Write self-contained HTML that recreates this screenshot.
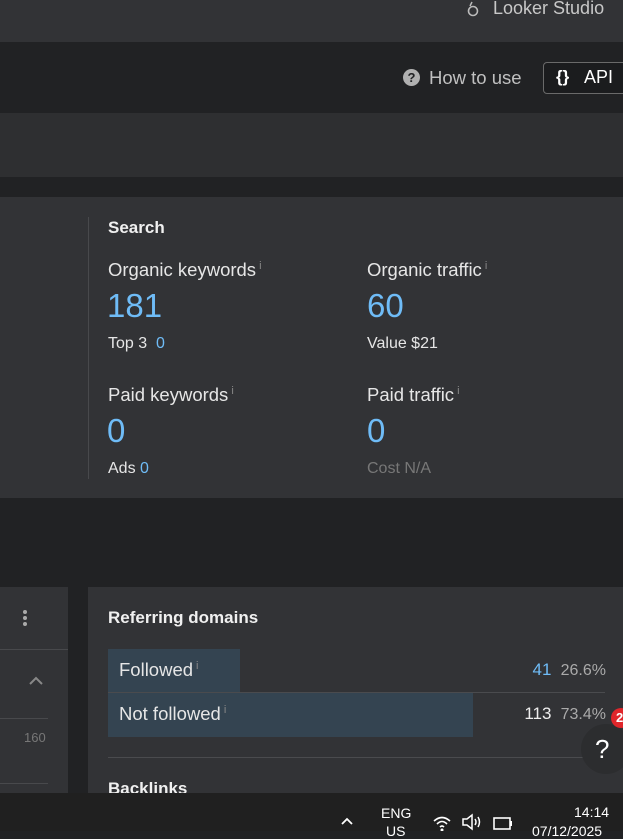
<!DOCTYPE html>
<html><head><style>
*{margin:0;padding:0;box-sizing:border-box}
body{width:623px;height:831px;overflow:hidden;background:#212224;font-family:"Liberation Sans",sans-serif;color:#e8e8e8;position:relative}
.a{position:absolute;white-space:nowrap}
.lbl{font-size:18.5px;color:#e6e6e6}
.lbl sup{font-size:11px;color:#888;vertical-align:7px;margin-left:3px}
.big{font-size:33px;color:#6fbcf7}
.sm{font-size:16px;color:#e6e6e6}
.blue{color:#6fbcf7}
</style></head><body>
<div class="a" style="left:0;top:0;width:623px;height:42px;background:#323336"></div>
<svg class="a" style="left:466px;top:0" width="14" height="18"><circle cx="7" cy="11" r="4.5" fill="none" stroke="#bbb" stroke-width="1.6"/><path d="M4 6 L6 2" stroke="#bbb" stroke-width="1.5"/></svg>
<div class="a" style="left:493px;top:-2px;font-size:18px;color:#c8c8c8">Looker Studio</div>
<div class="a" style="left:0;top:42px;width:623px;height:71px;background:#212224"></div>
<div class="a" style="left:403px;top:69px;width:17px;height:17px;border-radius:50%;background:#b0b0b0;color:#212224;font-size:13px;font-weight:bold;text-align:center;line-height:17px">?</div>
<div class="a" style="left:429px;top:67px;font-size:18.5px;color:#c0c0c0">How to use</div>
<div class="a" style="left:543px;top:62px;width:90px;height:32px;border:1px solid #6a6a6a;border-radius:4px;background:#1b1c1e"></div>
<div class="a" style="left:556px;top:67px;font-size:17px;font-weight:bold;color:#fff">{}</div>
<div class="a" style="left:584px;top:67px;font-size:18px;color:#fff">API</div>
<div class="a" style="left:0;top:113px;width:623px;height:64px;background:#2e2f31"></div>
<div class="a" style="left:0;top:197px;width:623px;height:301px;background:#323336"></div>
<div class="a" style="left:88px;top:217px;width:1px;height:262px;background:#48494c"></div>
<div class="a" style="left:108px;top:218px;font-size:17px;font-weight:bold;color:#f0f0f0">Search</div>
<div class="a lbl" style="left:108px;top:259px">Organic keywords<sup>i</sup></div>
<div class="a big" style="left:107px;top:287px">181</div>
<div class="a sm" style="left:108px;top:335px">Top 3 <span class="blue">&nbsp;0</span></div>
<div class="a lbl" style="left:367px;top:259px">Organic traffic<sup>i</sup></div>
<div class="a big" style="left:367px;top:287px">60</div>
<div class="a sm" style="left:367px;top:335px">Value $21</div>
<div class="a lbl" style="left:108px;top:384px">Paid keywords<sup>i</sup></div>
<div class="a big" style="left:107px;top:412px">0</div>
<div class="a sm" style="left:108px;top:460px">Ads <span class="blue">0</span></div>
<div class="a lbl" style="left:367px;top:384px">Paid traffic<sup>i</sup></div>
<div class="a big" style="left:367px;top:412px">0</div>
<div class="a sm" style="left:367px;top:460px;color:#777">Cost N/A</div>
<div class="a" style="left:0;top:587px;width:68px;height:206px;background:#323336"></div>
<div class="a" style="left:0;top:649px;width:68px;height:1px;background:#48494c"></div>
<div class="a" style="left:0;top:718px;width:48px;height:1px;background:#48494c"></div>
<div class="a" style="left:0;top:783px;width:48px;height:1px;background:#48494c"></div>
<svg class="a" style="left:21px;top:609px" width="8" height="18"><circle cx="4" cy="3" r="2" fill="#aaa"/><circle cx="4" cy="9" r="2" fill="#aaa"/><circle cx="4" cy="15" r="2" fill="#aaa"/></svg>
<svg class="a" style="left:28px;top:675px" width="16" height="12"><path d="M2 9 L8 3 L14 9" fill="none" stroke="#888" stroke-width="2"/></svg>
<div class="a" style="left:24px;top:730px;font-size:13px;color:#777">160</div>
<div class="a" style="left:88px;top:587px;width:535px;height:206px;background:#323336"></div>
<div class="a" style="left:108px;top:608px;font-size:17px;font-weight:bold;color:#f0f0f0">Referring domains</div>
<div class="a" style="left:108px;top:649px;width:132px;height:43px;background:#344451"></div>
<div class="a" style="left:108px;top:692px;width:497px;height:1px;background:#4a4b4e"></div>
<div class="a" style="left:108px;top:693px;width:365px;height:44px;background:#344451"></div>
<div class="a lbl" style="left:119px;top:659px">Followed<sup>i</sup></div>
<div class="a lbl" style="left:119px;top:703px">Not followed<sup>i</sup></div>
<div class="a" style="right:17px;top:660px;font-size:17px"><span class="blue">41</span> <span style="color:#aaa;font-size:16px">&nbsp;26.6%</span></div>
<div class="a" style="right:17px;top:704px;font-size:17px;color:#eee">113 <span style="color:#aaa;font-size:16px">&nbsp;73.4%</span></div>
<div class="a" style="left:108px;top:757px;width:497px;height:1px;background:#4a4b4e"></div>
<div class="a" style="left:108px;top:779px;font-size:17px;font-weight:bold;color:#f0f0f0">Backlinks</div>
<div class="a" style="left:581px;top:724px;width:50px;height:50px;border-radius:50%;background:#2c2d2f;color:#fff;font-size:26px;line-height:50px;padding-left:14px">?</div>
<div class="a" style="left:611px;top:708px;width:20px;height:20px;border-radius:50%;background:#e0262b;color:#fff;font-size:13px;font-weight:bold;line-height:20px;padding-left:5px">2</div>
<div class="a" style="left:0;top:793px;width:623px;height:38px;background:#202020"></div>
<svg class="a" style="left:340px;top:816px" width="14" height="10"><path d="M2 8 L7 3 L12 8" fill="none" stroke="#fff" stroke-width="1.8"/></svg>
<div class="a" style="left:381px;top:805px;font-size:14px;color:#fff">ENG</div>
<div class="a" style="left:386px;top:823px;font-size:14px;color:#fff">US</div>
<svg class="a" style="left:432px;top:814px" width="20" height="17"><path d="M2 7 Q10 0 18 7 M5 10 Q10 5 15 10 M8 13 Q10 11 12 13" fill="none" stroke="#fff" stroke-width="1.6"/><circle cx="10" cy="16" r="1.5" fill="#fff"/></svg>
<svg class="a" style="left:461px;top:813px" width="22" height="18"><path d="M2 6 H6 L11 2 V16 L6 12 H2 Z" fill="none" stroke="#fff" stroke-width="1.5"/><path d="M14 6 Q16 9 14 12 M17 4 Q20 9 17 14" fill="none" stroke="#fff" stroke-width="1.5"/></svg>
<svg class="a" style="left:492px;top:813px" width="22" height="18"><rect x="2" y="5" width="16" height="11" fill="none" stroke="#fff" stroke-width="1.6"/><rect x="18" y="8" width="2" height="5" fill="#fff"/></svg>
<div class="a" style="left:574px;top:804px;font-size:14px;color:#fff">14:14</div>
<div class="a" style="left:532px;top:823px;font-size:14px;color:#fff">07/12/2025</div>
</body></html>
